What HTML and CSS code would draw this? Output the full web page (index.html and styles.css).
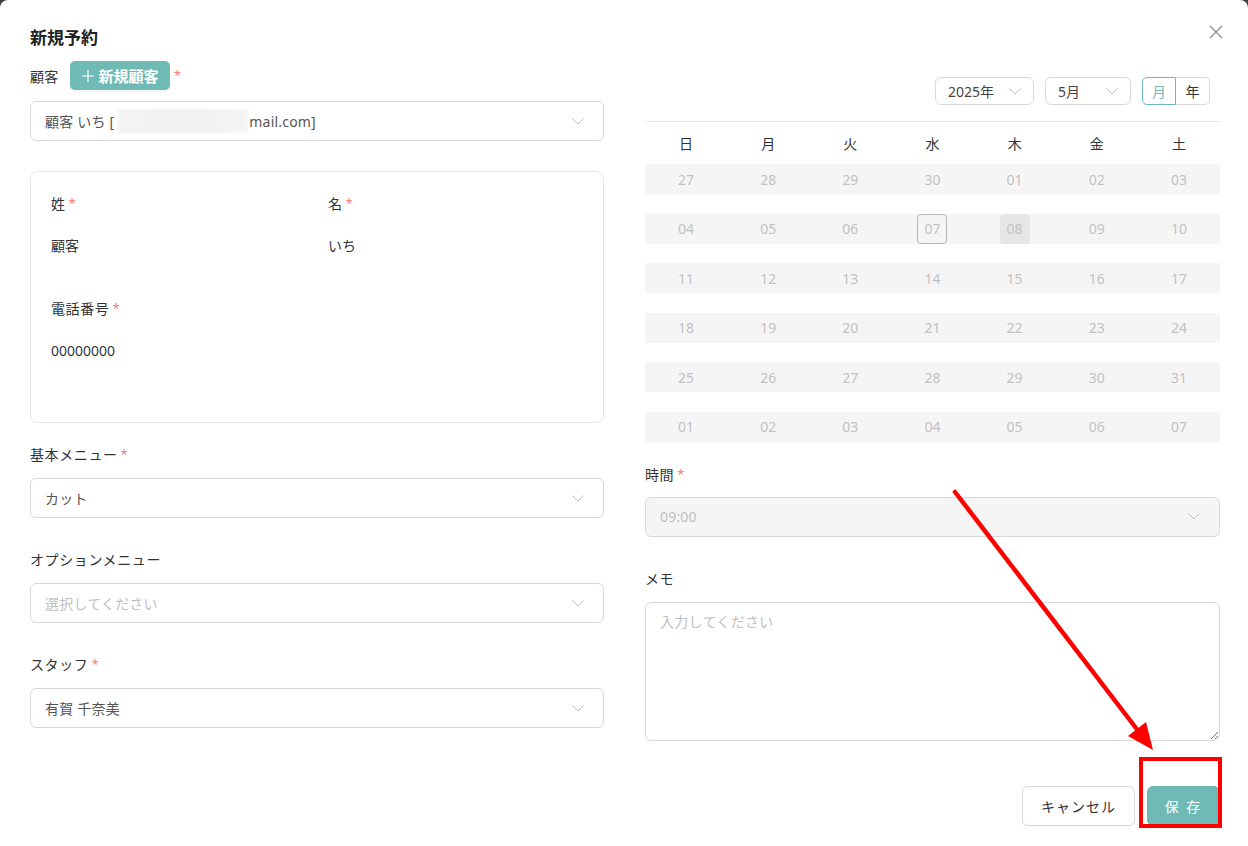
FILE: index.html
```html
<!DOCTYPE html>
<html lang="ja">
<head>
<meta charset="utf-8">
<title>新規予約</title>
<link rel="stylesheet" href="styles.css">
</head>
<body>
<div class="modal">
  <h1 class="title">新規予約</h1>
  <button class="close" aria-label="close">
    <svg width="14" height="14" viewBox="0 0 14 14"><path d="M1 1L13 13M13 1L1 13" stroke="#8c8c8c" stroke-width="1.3" fill="none"/></svg>
  </button>

  <div class="grid">
    <div class="col">
      <div class="cust-row">
        <span>顧客</span>
        <span class="btn-new"><svg width="12" height="12" viewBox="0 0 12 12"><path d="M6 0V12M0 6H12" stroke="#fff" stroke-width="1.2"/></svg><span>新規顧客</span></span>
        <span class="req">*</span>
      </div>
      <div class="select">
        <span class="val">顧客 いち [<span class="blur"></span>mail.com]</span>
        <svg class="chev" width="12" height="7" viewBox="0 0 12 7"><path d="M0.5 0.5L6 6L11.5 0.5" stroke="#bfbfbf" stroke-width="1" fill="none"/></svg>
      </div>

      <div class="card">
        <div>
          <div class="f-label">姓<span class="req">*</span></div>
          <div class="f-value">顧客</div>
        </div>
        <div>
          <div class="f-label">名<span class="req">*</span></div>
          <div class="f-value">いち</div>
        </div>
        <div>
          <div class="f-label">電話番号<span class="req">*</span></div>
          <div class="f-value">00000000</div>
        </div>
      </div>

      <div class="item first">
        <div class="label">基本メニュー<span class="req">*</span></div>
        <div class="select">
          <span class="val">カット</span>
          <svg class="chev" width="12" height="7" viewBox="0 0 12 7"><path d="M0.5 0.5L6 6L11.5 0.5" stroke="#bfbfbf" stroke-width="1" fill="none"/></svg>
        </div>
      </div>
      <div class="item">
        <div class="label">オプションメニュー</div>
        <div class="select">
          <span class="val ph">選択してください</span>
          <svg class="chev" width="12" height="7" viewBox="0 0 12 7"><path d="M0.5 0.5L6 6L11.5 0.5" stroke="#bfbfbf" stroke-width="1" fill="none"/></svg>
        </div>
      </div>
      <div class="item">
        <div class="label">スタッフ<span class="req">*</span></div>
        <div class="select">
          <span class="val">有賀 千奈美</span>
          <svg class="chev" width="12" height="7" viewBox="0 0 12 7"><path d="M0.5 0.5L6 6L11.5 0.5" stroke="#bfbfbf" stroke-width="1" fill="none"/></svg>
        </div>
      </div>
    </div>

    <div class="col">
      <div class="cal-top">
        <div class="mini-select year"><span>2025年</span><svg width="12" height="7" viewBox="0 0 12 7"><path d="M0.5 0.5L6 6L11.5 0.5" stroke="#bfbfbf" stroke-width="1" fill="none"/></svg></div>
        <div class="mini-select month"><span>5月</span><svg width="12" height="7" viewBox="0 0 12 7"><path d="M0.5 0.5L6 6L11.5 0.5" stroke="#bfbfbf" stroke-width="1" fill="none"/></svg></div>
        <div class="radio">
          <span class="opt on">月</span><span class="opt">年</span>
        </div>
      </div>
      <div class="week-head">
        <span>日</span><span>月</span><span>火</span><span>水</span><span>木</span><span>金</span><span>土</span>
      </div>
      <div class="weeks">
        <div class="week"><span>27</span><span>28</span><span>29</span><span>30</span><span>01</span><span>02</span><span>03</span></div>
        <div class="week"><span>04</span><span>05</span><span>06</span><span><i class="today">07</i></span><span><i class="sel">08</i></span><span>09</span><span>10</span></div>
        <div class="week"><span>11</span><span>12</span><span>13</span><span>14</span><span>15</span><span>16</span><span>17</span></div>
        <div class="week"><span>18</span><span>19</span><span>20</span><span>21</span><span>22</span><span>23</span><span>24</span></div>
        <div class="week"><span>25</span><span>26</span><span>27</span><span>28</span><span>29</span><span>30</span><span>31</span></div>
        <div class="week"><span>01</span><span>02</span><span>03</span><span>04</span><span>05</span><span>06</span><span>07</span></div>
      </div>

      <div class="item time">
        <div class="label">時間<span class="req">*</span></div>
        <div class="select disabled">
          <span class="val">09:00</span>
          <svg class="chev" width="12" height="7" viewBox="0 0 12 7"><path d="M0.5 0.5L6 6L11.5 0.5" stroke="#bfbfbf" stroke-width="1" fill="none"/></svg>
        </div>
      </div>
      <div class="item">
        <div class="label">メモ</div>
        <textarea class="memo" placeholder="入力してください"></textarea>
      </div>
    </div>
  </div>

  <div class="footer">
    <button class="btn cancel">キャンセル</button>
    <button class="btn save">保 存</button>
  </div>

  <svg class="annot" width="1248" height="846" viewBox="0 0 1248 846">
    <line x1="955" y1="492" x2="1139" y2="732" stroke="#ff0000" stroke-width="4.5" stroke-linecap="round"/>
    <polygon points="1153,750 1128,736 1146,722" fill="#ff0000"/>
    <rect x="1141" y="759" width="79" height="67" fill="none" stroke="#ff0000" stroke-width="4"/>
  </svg>
</div>
</body>
</html>
```

FILE: styles.css
```css
html, body {
  margin: 0;
  background: #3d3d3d;
}
body {
  font-family: "Noto Sans", "Noto Sans CJK JP", sans-serif;
  font-size: 14px;
  color: #333;
}
.modal {
  position: relative;
  width: 1248px;
  height: 846px;
  box-sizing: border-box;
  background: #fff;
  border-radius: 8px 8px 0 0;
  padding: 26px 28px 0 30px;
  overflow: hidden;
}
.title {
  margin: 0;
  font-size: 17px;
  font-weight: 700;
  line-height: 24px;
  color: #222;
}
.close {
  position: absolute;
  top: 25px;
  right: 25px;
  background: none;
  border: none;
  padding: 0;
  line-height: 0;
}
.grid {
  display: grid;
  grid-template-columns: 574px 575px;
  column-gap: 41px;
  margin-top: 11px;
}
.col {
  display: flex;
  flex-direction: column;
}
.req {
  color: #f47c7c;
  margin-left: 3px;
  font-size: 13px;
  letter-spacing: 0;
  position: relative;
  top: -1px;
}
.cust-row {
  display: flex;
  align-items: center;
  height: 29px;
}
.cust-row > span:first-child {
  margin-right: 11px;
  letter-spacing: 0.3px;
}
.btn-new {
  display: flex;
  align-items: center;
  gap: 5px;
  height: 29px;
  box-sizing: border-box;
  padding: 0 11px 0 12px;
  background: #6fbab4;
  color: #fff;
  border-radius: 5px;
  font-weight: 700;
  font-size: 15px;
  box-shadow: 0 2px 0 rgba(0, 0, 0, 0.03);
}
.cust-row .req {
  margin-left: 4px;
}
.select {
  height: 40px;
  box-sizing: border-box;
  border: 1px solid #d9d9d9;
  border-radius: 6px;
  display: flex;
  align-items: center;
  justify-content: space-between;
  padding: 0 19px 0 14px;
  margin-top: 11px;
  color: #555;
}
.select .val {
  display: flex;
  align-items: center;
  letter-spacing: 0.2px;
}
.select .ph {
  color: #bfbfbf;
}
.select.disabled {
  background: #f5f5f5;
}
.select.disabled .val {
  color: #bfbfbf;
}
.blur {
  display: inline-block;
  width: 130px;
  height: 24px;
  margin: 0 1px 0 4px;
  background: linear-gradient(90deg, #f4f4f4, #f1f1f1 50%, #f5f5f5);
  filter: blur(1px);
}
.card {
  margin-top: 30px;
  border: 1px solid #e6e6e6;
  border-radius: 8px;
  padding: 21px 20px 19px;
  display: grid;
  grid-template-columns: 277px 1fr;
}
.f-label, .f-value, .label {
  line-height: 22px;
}
.f-label, .label {
  letter-spacing: 0.6px;
}
.f-value {
  margin-top: 20px;
  margin-bottom: 41px;
}
.item {
  margin-top: 31px;
}
.item.first {
  margin-top: 21px;
}
.item .select {
  margin-top: 12px;
}
.item.time {
  margin-top: 22px;
}
.item.time .select {
  margin-top: 11px;
}

/* calendar */
.cal-top {
  display: flex;
  justify-content: flex-end;
  align-items: center;
  gap: 11px;
  padding: 16px 10px 16px 0;
  border-bottom: 1px solid #ececec;
}
.mini-select {
  height: 28px;
  box-sizing: border-box;
  border: 1px solid #d9d9d9;
  border-radius: 6px;
  display: flex;
  align-items: center;
  justify-content: space-between;
  padding: 0 12px 0 12px;
  color: #444;
}
.mini-select.year {
  width: 99px;
}
.mini-select.month {
  width: 86px;
}
.radio {
  display: flex;
  height: 28px;
}
.opt {
  width: 34px;
  box-sizing: border-box;
  display: flex;
  align-items: center;
  justify-content: center;
  border: 1px solid #d9d9d9;
  color: #333;
}
.opt:first-child {
  border-radius: 5px 0 0 5px;
}
.opt:last-child {
  border-radius: 0 5px 5px 0;
  border-left: none;
}
.opt.on {
  border-color: #6fbab4;
  color: #6fbab4;
}
.week-head, .week {
  display: grid;
  grid-template-columns: repeat(7, 1fr);
}
.week-head {
  height: 42px;
  align-items: center;
  text-align: center;
  color: #333;
}
.weeks {
  display: flex;
  flex-direction: column;
  gap: 19.6px;
}
.week {
  height: 30px;
  background: #f5f5f5;
  align-items: center;
}
.week span {
  display: flex;
  justify-content: center;
  color: #c2c2c2;
}
.week i {
  font-style: normal;
  width: 30px;
  height: 30px;
  box-sizing: border-box;
  display: flex;
  align-items: center;
  justify-content: center;
  border-radius: 4px;
}
.week i.today {
  border: 1px solid #b8b8b8;
}
.week i.sel {
  background: #e6e6e6;
}
.memo {
  display: block;
  margin-top: 12px;
  width: 100%;
  height: 139px;
  box-sizing: border-box;
  border: 1px solid #d9d9d9;
  border-radius: 6px;
  padding: 8px 14px;
  font-family: inherit;
  font-size: 14px;
  line-height: 22px;
  color: #333;
  resize: vertical;
  outline: none;
}
.memo::placeholder {
  color: #c0c0c0;
  letter-spacing: 0.3px;
}

/* footer */
.footer {
  display: flex;
  justify-content: flex-end;
  gap: 12px;
  margin-top: 45px;
}
.btn {
  height: 40px;
  box-sizing: border-box;
  border-radius: 6px;
  font-family: inherit;
  font-size: 14px;
  letter-spacing: 1px;
}
.cancel {
  width: 113px;
  background: #fff;
  border: 1px solid #d9d9d9;
  color: #333;
  box-shadow: 0 2px 0 rgba(0, 0, 0, 0.02);
}
.save {
  width: 73px;
  background: #6fbab4;
  border: 1px solid #6fbab4;
  color: #fff;
  letter-spacing: 2px;
}
.annot {
  position: absolute;
  left: 0;
  top: 0;
  pointer-events: none;
}
```
